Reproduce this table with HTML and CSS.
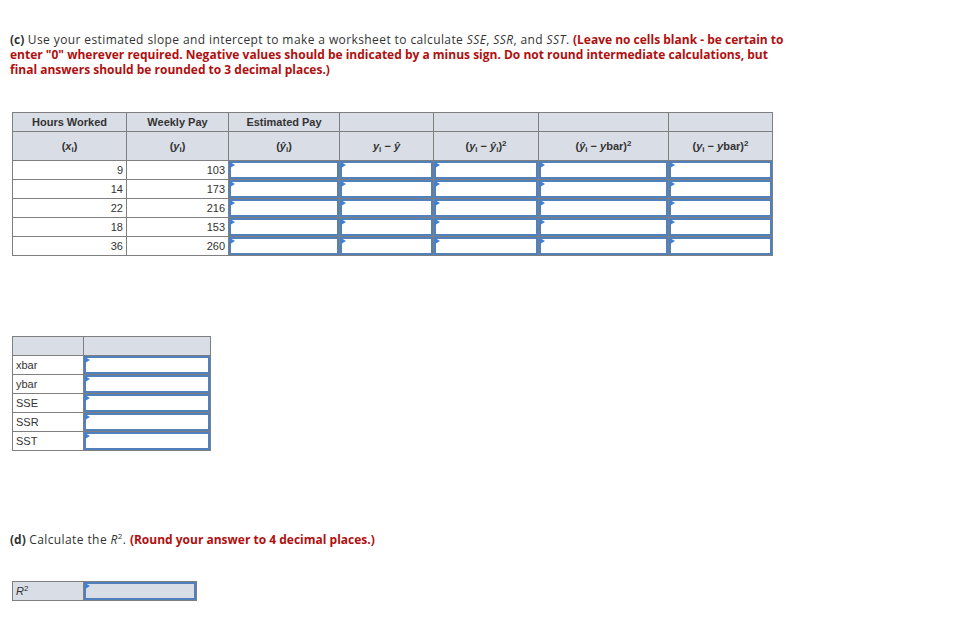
FILE: index.html
```html
<!DOCTYPE html>
<html>
<head>
<meta charset="utf-8">
<link rel="stylesheet" href="styles.css">
</head>
<body>
<div class="page">
  <p class="q q-c"><b>(c)</b> Use your estimated slope and intercept to make a worksheet to calculate <i>SSE</i>, <i>SSR</i>, and <i>SST</i>. <span class="warn">(Leave no cells blank - be certain to<br>enter "0" wherever required. Negative values should be indicated by a minus sign. Do not round intermediate calculations, but<br>final answers should be rounded to 3 decimal places.)</span></p>

  <table class="grid main">
    <colgroup>
      <col class="c1"><col class="c2"><col class="c3"><col class="c4"><col class="c5"><col class="c6"><col class="c7">
    </colgroup>
    <tr class="h1">
      <th>Hours Worked</th><th>Weekly Pay</th><th>Estimated Pay</th><th></th><th></th><th></th><th></th>
    </tr>
    <tr class="h2">
      <th>(<i>x</i><sub>i</sub>)</th>
      <th>(<i>y</i><sub>i</sub>)</th>
      <th>(<i>ŷ</i><sub>i</sub>)</th>
      <th><i>y</i><sub>i</sub> − <i>ŷ</i></th>
      <th>(<i>y</i><sub>i</sub> − <i>ŷ</i><sub>i</sub>)<sup>2</sup></th>
      <th>(<i>ŷ</i><sub>i</sub> − <i>y</i>bar)<sup>2</sup></th>
      <th>(<i>y</i><sub>i</sub> − <i>y</i>bar)<sup>2</sup></th>
    </tr>
    <tr><td class="num">9</td><td class="num">103</td><td class="in"><div class="box"></div></td><td class="in"><div class="box"></div></td><td class="in"><div class="box"></div></td><td class="in"><div class="box"></div></td><td class="in"><div class="box"></div></td></tr>
    <tr><td class="num">14</td><td class="num">173</td><td class="in"><div class="box"></div></td><td class="in"><div class="box"></div></td><td class="in"><div class="box"></div></td><td class="in"><div class="box"></div></td><td class="in"><div class="box"></div></td></tr>
    <tr><td class="num">22</td><td class="num">216</td><td class="in"><div class="box"></div></td><td class="in"><div class="box"></div></td><td class="in"><div class="box"></div></td><td class="in"><div class="box"></div></td><td class="in"><div class="box"></div></td></tr>
    <tr><td class="num">18</td><td class="num">153</td><td class="in"><div class="box"></div></td><td class="in"><div class="box"></div></td><td class="in"><div class="box"></div></td><td class="in"><div class="box"></div></td><td class="in"><div class="box"></div></td></tr>
    <tr><td class="num">36</td><td class="num">260</td><td class="in"><div class="box"></div></td><td class="in"><div class="box"></div></td><td class="in"><div class="box"></div></td><td class="in"><div class="box"></div></td><td class="in"><div class="box"></div></td></tr>
  </table>

  <table class="grid stats">
    <colgroup><col class="s1"><col class="s2"></colgroup>
    <tr class="h1"><th></th><th></th></tr>
    <tr><td class="lbl">xbar</td><td class="in"><div class="box"></div></td></tr>
    <tr><td class="lbl">ybar</td><td class="in"><div class="box"></div></td></tr>
    <tr><td class="lbl">SSE</td><td class="in"><div class="box"></div></td></tr>
    <tr><td class="lbl">SSR</td><td class="in"><div class="box"></div></td></tr>
    <tr><td class="lbl">SST</td><td class="in"><div class="box"></div></td></tr>
  </table>

  <p class="q q-d"><b>(d)</b> Calculate the <i>R</i><sup>2</sup>. <span class="warn">(Round your answer to 4 decimal places.)</span></p>

  <table class="grid rsq">
    <colgroup><col class="r1"><col class="r2"></colgroup>
    <tr><td class="lbl shaded"><i>R</i><sup>2</sup></td><td class="in shaded"><div class="box"></div></td></tr>
  </table>
</div>
</body>
</html>
```

FILE: styles.css
```css
html, body {
  margin: 0;
  padding: 0;
  background: #fff;
}

.page {
  padding: 32px 0 0 10px;
}

.q {
  margin: 0;
  font-family: "Open Sans", Lato, sans-serif;
  font-size: 12px;
  line-height: 15px;
  color: #333;
  white-space: nowrap;
  letter-spacing: 0.4px;
}

.q b {
  font-weight: 700;
  letter-spacing: 0;
}

.q i {
  font-style: italic;
}

.q sup {
  font-size: 8px;
  line-height: 0;
  vertical-align: 5px;
}

.warn {
  color: #b10f0f;
  font-weight: 700;
  letter-spacing: 0;
}

.q-d {
  margin-top: 81px;
}

.grid {
  border-collapse: collapse;
  table-layout: fixed;
  font-family: "Liberation Sans", Arial, sans-serif;
  font-size: 11px;
  color: #333;
  margin-left: 2px;
}

.grid th,
.grid td {
  border: 1px solid #7f7f7f;
  padding: 0;
  height: 18px;
  box-sizing: border-box;
}

.grid th {
  background: #d9dde6;
  font-weight: 700;
  text-align: center;
  vertical-align: middle;
}

.main {
  margin-top: 35px;
  width: 760px;
}

.c1 { width: 114px; }
.c2 { width: 102px; }
.c3 { width: 111px; }
.c4 { width: 94px; }
.c5 { width: 105px; }
.c6 { width: 130px; }
.c7 { width: 104px; }

.main .h1 th {
  height: 19px;
}

.main .h2 th {
  height: 29px;
}

.grid sub {
  font-size: 8px;
  vertical-align: -2px;
  line-height: 0;
}

.grid sup {
  font-size: 8px;
  vertical-align: 4px;
  line-height: 0;
}

.grid tr td {
  height: 19px;
}

.num {
  text-align: right;
  padding-right: 3px !important;
}

.lbl {
  text-align: left;
  padding-left: 3px !important;
}

.in {
  position: relative;
}

.box {
  position: absolute;
  inset: 0;
  border: 2px solid #5181bd;
  box-sizing: border-box;
}

.box::before {
  content: "";
  position: absolute;
  left: -1px;
  top: -1px;
  border-left: 5px solid #3e7fd8;
  border-top: 3px solid transparent;
  border-bottom: 3px solid transparent;
}

.stats {
  margin-top: 80px;
  width: 198px;
}

.s1 { width: 71px; }
.s2 { width: 127px; }

.stats .h1 th {
  height: 19px;
}

.rsq {
  margin-top: 34px;
  width: 184px;
}

.r1 { width: 71px; }
.r2 { width: 113px; }

.shaded {
  background: #d9dde6;
}
```
